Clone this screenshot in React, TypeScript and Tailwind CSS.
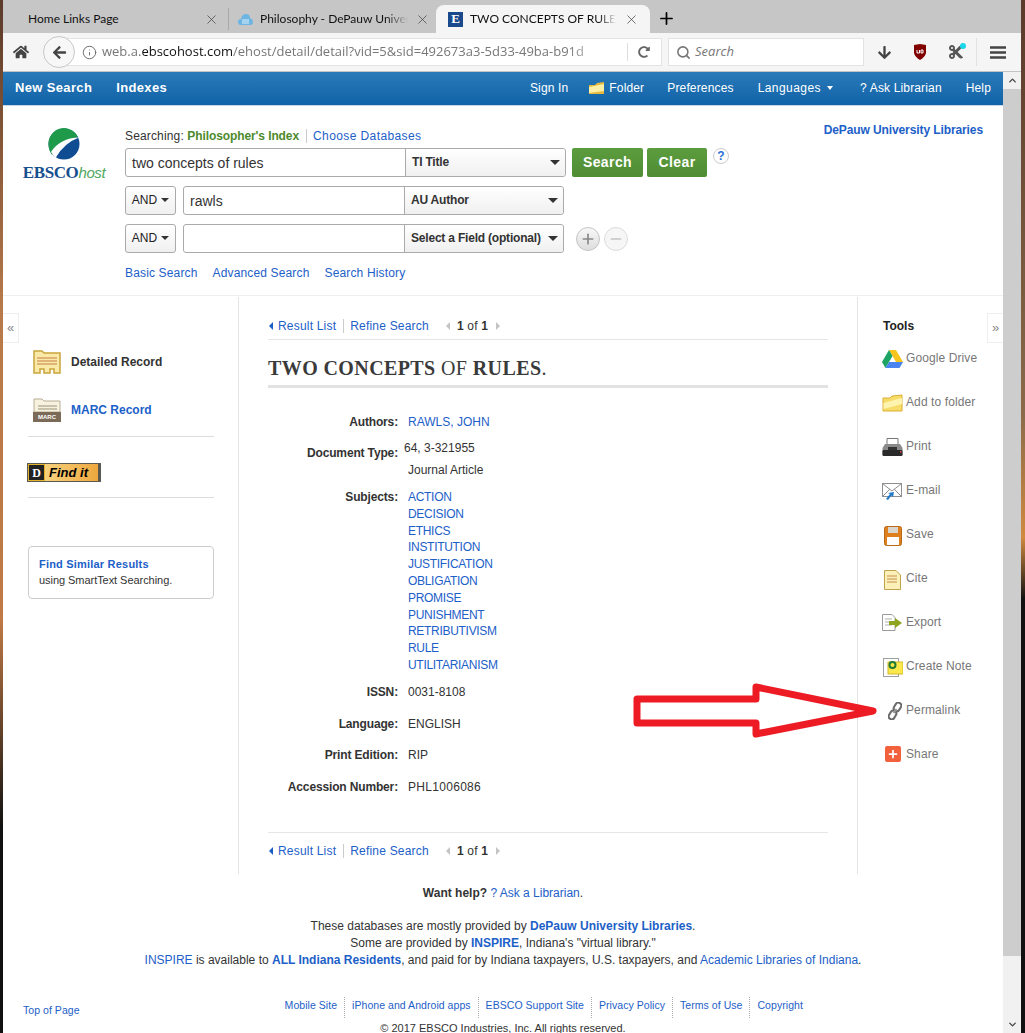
import { ReactNode } from "react";
import { FaArrowDown, FaArrowLeft, FaCut, FaHome, FaRedoAlt } from "react-icons/fa";
import { ChevronDown, ChevronUp, Info, Search, X, Plus, Minus } from "lucide-react";

const subjects = ["ACTION", "DECISION", "ETHICS", "INSTITUTION", "JUSTIFICATION", "OBLIGATION", "PROMISE", "PUNISHMENT", "RETRIBUTIVISM", "RULE", "UTILITARIANISM"];
const footerLinks = ["Mobile Site", "iPhone and Android apps", "EBSCO Support Site", "Privacy Policy", "Terms of Use", "Copyright"];

const Caret = ({ className = "" }: { className?: string }) => (
  <span className={`inline-block w-0 h-0 border-x-[4px] border-x-transparent border-t-[4px] border-t-[#333] ${className}`} />
);

const FolderIcon = () => (
  <svg width="21" height="18" viewBox="0 0 21 18">
    <path d="M1 4 L8 4 L10 2 L20 1 L20 17 L1 17 Z" fill="#f8dc6a" stroke="#dcae33" />
    <path d="M1.5 9 L20 4 L20 10 L1.5 15 Z" fill="#fff3b0" />
  </svg>
);

const DriveIcon = () => (
  <svg width="21" height="18" viewBox="0 0 21 18">
    <path d="M7 0 L14 0 L21 12 L14 12 Z" fill="#f8c51c" />
    <path d="M7 0 L10.5 6 L3.5 18 L0 12 Z" fill="#1da462" />
    <path d="M7 12 L21 12 L17.500 18 L3.500 18 Z" fill="#4a84f0" />
  </svg>
);

const PrintIcon = () => (
  <svg width="21" height="20" viewBox="0 0 21 20">
    <path d="M5 0.500 H16 V8 H5 Z" fill="#fff" stroke="#777" />
    <path d="M3 6 H18 L20.500 10 V17 H0.500 V10 Z" fill="#8a8a8a" />
    <rect x="0.500" y="12" width="20" height="6" rx="1" fill="#2a2a2a" />
    <rect x="6" y="9" width="9" height="3" fill="#333" />
    <rect x="18" y="13" width="1.500" height="1.500" fill="#d44" />
  </svg>
);

const MailIcon = () => (
  <svg width="21" height="18" viewBox="0 0 21 18">
    <rect x="0.500" y="1.500" width="19" height="13" fill="#fff" stroke="#8f8f8f" />
    <path d="M1 2 L10 9 L19 2 M1 14 L8 7 M19 14 L12 7" fill="none" stroke="#8f8f8f" />
    <path d="M4 17 L8 12 L6 11 L12 10 L11 15 L9.500 13.500 L6 18 Z" fill="#1f78c8" />
  </svg>
);

const SaveIcon = () => (
  <svg width="18" height="20" viewBox="0 0 18 20">
    <rect x="0.500" y="0.500" width="17" height="19" rx="2" fill="#dd7f1d" stroke="#b96a18" />
    <rect x="4" y="1" width="10" height="6" fill="#d9d4cc" />
    <rect x="3" y="11" width="12" height="8" fill="#fff" />
  </svg>
);

const CiteIcon = () => (
  <svg width="17" height="20" viewBox="0 0 17 20">
    <path d="M0.500 0.500 H12 L16.500 5 V19.500 H0.500 Z" fill="#fbf0b8" stroke="#bda34a" />
    <path d="M3 6 H13 M3 9 H13 M3 12 H13" stroke="#d9ae72" strokeWidth="1.500" />
  </svg>
);

const ExportIcon = () => (
  <svg width="21" height="17" viewBox="0 0 21 17">
    <path d="M0.500 0.500 H10 L13 3.500 V16.500 H0.500 Z" fill="#fff" stroke="#9a9a9a" />
    <path d="M3 5 H10 M3 8 H8 M3 11 H10" stroke="#b0b0b0" />
    <path d="M7 7 H13 V4 L20 9 L13 14 V11 H7 Z" fill="#8da51f" />
  </svg>
);

const NoteIcon = () => (
  <svg width="20" height="19" viewBox="0 0 20 19">
    <rect x="0.500" y="0.500" width="15" height="18" fill="#fff" stroke="#a0a0a0" />
    <rect x="5" y="4" width="15" height="12" fill="#fbe84b" stroke="#d4b82c" />
    <circle cx="9.500" cy="7" r="3" fill="none" stroke="#1f7a35" strokeWidth="2" />
  </svg>
);

const ChainIcon = () => (
  <svg width="14" height="18" viewBox="0 0 14 18" className="ml-[5px]">
    <g fill="none" stroke="#6a6a6a" strokeWidth="2">
      <rect x="6.500" y="0.500" width="6" height="9" rx="3" transform="rotate(32 9.500 5)" />
      <rect x="1.500" y="8.500" width="6" height="9" rx="3" transform="rotate(32 4.500 13)" />
      <path d="M5.500 11 L8.500 7" stroke="#999" />
    </g>
  </svg>
);

const ShareIcon = () => (
  <div className="w-4 h-4 rounded-[2px] bg-[#f2603c] flex items-center justify-center">
    <Plus size={12} color="#fff" strokeWidth={3.500} />
  </div>
);

const tools: { label: string; icon: ReactNode }[] = [
  { label: "Google Drive", icon: <DriveIcon /> },
  { label: "Add to folder", icon: <FolderIcon /> },
  { label: "Print", icon: <PrintIcon /> },
  { label: "E-mail", icon: <MailIcon /> },
  { label: "Save", icon: <SaveIcon /> },
  { label: "Cite", icon: <CiteIcon /> },
  { label: "Export", icon: <ExportIcon /> },
  { label: "Create Note", icon: <NoteIcon /> },
  { label: "Permalink", icon: <ChainIcon /> },
  { label: "Share", icon: <ShareIcon /> },
];

const RecordNav = () => (
  <div className="flex items-center h-[17px] text-[12px] tracking-[0.2px]">
    <span className="w-0 h-0 border-y-[4px] border-y-transparent border-r-[4px] border-r-[#1a5fc4] mr-[5px] ml-[1px]" />
    <a className="text-[#1c60c8]">Result List</a>
    <span className="w-px h-[14px] bg-[#ccc] ml-[7px] mr-[6px]" />
    <a className="text-[#1c60c8]">Refine Search</a>
    <span className="w-0 h-0 border-y-[4px] border-y-transparent border-r-[4px] border-r-[#c4c4c4] ml-[17px] mr-[7px]" />
    <span className="text-[#333]"><b>1</b> of <b>1</b></span>
    <span className="w-0 h-0 border-y-[4px] border-y-transparent border-l-[4px] border-l-[#c4c4c4] ml-[8px]" />
  </div>
);

const FieldRow = ({ label, children, className = "" }: { label: string; children: ReactNode; className?: string }) => (
  <div className={`flex leading-[17px] ${className}`}>
    <div className="w-[130px] text-right font-bold text-[#333] shrink-0 tracking-[-0.15px]">{label}:</div>
    <div className="ml-[10px]">{children}</div>
  </div>
);

const SelectBox = ({ label, className = "" }: { label: string; className?: string }) => (
  <div className={`h-full flex items-center justify-between pl-[6px] pr-[5px] border-l border-[#aaa] bg-gradient-to-b from-white to-[#f0f0f0] text-[12px] font-bold text-[#333] tracking-[-0.2px] ${className}`}>
    <span className="pb-[2px]">{label}</span>
    <Caret className="border-x-[5px]! border-t-[5px]!" />
  </div>
);

const AndBox = () => (
  <div className="w-[51px] h-full flex items-center justify-center gap-[4px] pb-[1px] border border-[#aaa] rounded-[3px] bg-gradient-to-b from-white to-[#f0f0f0] text-[12px] text-[#222]">
    AND <Caret />
  </div>
);

const Tab = ({ children, close, className = "" }: { children: ReactNode; close: string; className?: string }) => (
  <div className={`flex items-center relative ${className}`}>
    {children}
    <X size={15} strokeWidth={1.200} color="#444" className={close} />
  </div>
);

export default function App() {
  return (
    <div className="w-[1025px] h-[1033px] overflow-hidden relative flex font-['Liberation_Sans',Arial,sans-serif] bg-white text-[12px] text-[#333]">
      <div className="w-[3px] shrink-0 bg-[linear-gradient(#5a3a2a,#b87a4a_30%,#c07a45_60%,#111_80%,#111)]" />
      <div className="w-[1018px] shrink-0 flex flex-col">
        {/* browser tabs */}
        <div className="h-[33px] shrink-0 bg-[#c6c6c6] flex text-[12px] text-[#111] font-['Lato',sans-serif]">
          <Tab close="ml-auto mr-[9px]" className="w-[226px] pl-[25px] border-r border-[#a9a9a9] mt-[8px] mb-[3px]">Home Links Page</Tab>
          <Tab close="ml-auto mr-[6px]" className="w-[207px] pl-[9px] pt-[5px]">
            <svg width="15" height="13" viewBox="0 0 15 13" className="mr-[7px]">
              <path d="M3 12 Q0 12 0 9 Q0 6 3 6 Q4 1 8 1 Q12 1 12 5 Q15 6 15 9 Q15 12 12 12 Z" fill="#6db5e3" />
              <rect x="4" y="6" width="7" height="5" fill="#a5d2ee" />
            </svg>
            <span className="w-[148px] overflow-hidden whitespace-nowrap [mask-image:linear-gradient(90deg,#000_85%,transparent)]">Philosophy - DePauw Univer</span>
          </Tab>
          <Tab close="ml-auto mr-[11px]" className="w-[214px] mt-[5px] bg-[#f5f5f5] rounded-t-[8px] pl-[12px]">
            <span className="w-[15px] h-[15px] bg-[#1b4a8c] text-white text-[13px] font-bold font-['Liberation_Serif',serif] flex items-center justify-center mr-[7px]">E</span>
            <span className="w-[146px] overflow-hidden whitespace-nowrap [mask-image:linear-gradient(90deg,#000_88%,transparent)]">TWO CONCEPTS OF RULES:</span>
          </Tab>
          <Plus size={19} color="#000" strokeWidth={2.200} className="ml-[7px] mt-[9px]" />
        </div>

        {/* browser toolbar */}
        <div className="h-[39px] shrink-0 bg-[#f5f5f5] border-b border-[#c4c4c4] flex items-center relative">
          <FaHome size={16} color="#444" className="ml-[10px]" />
          <div className="ml-[29px] h-[28px] w-[604px] bg-white border border-[#e3e3e3] flex items-center pl-[23px] text-[13px] text-[#777] font-['Open_Sans',sans-serif]">
            <Info size={15} color="#666" strokeWidth={1.500} className="mr-[5px] shrink-0" />
            <span className="w-[520px] overflow-hidden whitespace-nowrap [mask-image:linear-gradient(90deg,#000_90%,transparent_97%)]">web.a.<span className="text-[#111]">ebscohost.com</span>/ehost/detail/detail?vid=5&amp;sid=492673a3-5d33-49ba-b91d</span>
            <span className="w-px h-[18px] bg-[#ddd] ml-[5px]" />
            <FaRedoAlt size={12} color="#666" className="ml-[10px]" />
          </div>
          <div className="absolute left-[40px] top-[3px] w-[32px] h-[32px] rounded-full border border-[#c8c8c8] bg-[#f7f7f7] flex items-center justify-center">
            <FaArrowLeft size={15} color="#444" />
          </div>
          <div className="ml-[6px] w-[196px] h-[28px] bg-white border border-[#e3e3e3] flex items-center pl-[7px] text-[13px] italic text-[#777] font-['Open_Sans',sans-serif]">
            <Search size={15} color="#777" strokeWidth={2.500} className="mr-[4px]" />
            Search
          </div>
          <FaArrowDown size={15} color="#444" className="ml-[13px]" />
          <svg width="14" height="16" viewBox="0 0 14 16" className="ml-[21px]">
            <path d="M1 1 L7 0 L13 1 L13 9 Q12 13 7 16 Q2 13 1 9 Z" fill="#800000" />
            <path d="M4 6 V9 H6.500 V6 M8 6 H10 V9 H8 Z" fill="none" stroke="#fff" strokeWidth="1" />
          </svg>
          <div className="relative ml-[21px]">
            <FaCut size={16} color="#555" />
            <span className="absolute -top-[1px] -right-[2px] w-[6px] h-[6px] rounded-full bg-[#19d7e8]" />
          </div>
          <span className="w-px h-[28px] bg-[#e2e2e2] ml-[12px]" />
          <svg width="16" height="13" viewBox="0 0 16 13" className="ml-[13px]">
            <path d="M0 1.500 H16 M0 6.500 H16 M0 11.500 H16" stroke="#444" strokeWidth="2.500" />
          </svg>
        </div>

        <div className="flex flex-1 min-h-0">
          <div className="w-[1000px] shrink-0 flex flex-col">
            {/* ebsco nav */}
            <div className="h-[34px] shrink-0 bg-gradient-to-b from-[#2a7ab9] to-[#0f63a8] border-b border-[#c9d6e2] flex items-center pl-[12px] pr-[12px] pb-[2px] text-white tracking-[0.15px]">
              <span className="font-bold text-[13px] tracking-[0.35px]">New Search</span>
              <span className="font-bold text-[13px] tracking-[0.35px] ml-[24px]">Indexes</span>
              <span className="ml-auto">Sign In</span>
              <svg width="15" height="12" viewBox="0 0 15 12" className="ml-[21px] mr-[5px]">
                <path d="M0 3 L6 3 L8 1 L15 0 V12 H0 Z" fill="#e3b93e" />
                <path d="M0 5 L15 2 V9 L0 11 Z" fill="#fff0a5" />
              </svg>
              <span>Folder</span>
              <span className="ml-[23px]">Preferences</span>
              <span className="ml-[24px] tracking-[0.45px]">Languages</span>
              <span className="ml-[6px] w-0 h-0 border-x-[3px] border-x-transparent border-t-[4px] border-t-white" />
              <span className="ml-[27px]">? Ask Librarian</span>
              <span className="ml-[24px]">Help</span>
            </div>

            {/* search header */}
            <div className="h-[190px] shrink-0 flex border-b border-[#eeeeee]">
              <div className="w-[122px] shrink-0 pt-[22px] flex flex-col items-center">
                <svg width="32" height="32" viewBox="0 0 32 32">
                  <circle cx="16" cy="16" r="15.500" fill="#0f4c92" />
                  <path d="M0.500 16 A15.500 15.500 0 0 1 30 9 Q12 12 4 27 Q0.500 22 0.500 16 Z" fill="#1f9a4a" />
                  <path d="M3 24 Q12 10 31 9.500 Q16 15 7.500 30 Z" fill="#fff" />
                </svg>
                <div className="mt-[3px] leading-[20px] text-[17px] font-bold tracking-[-0.4px] text-[#17508f] font-['Liberation_Serif',serif]">
                  EBSCO<span className="font-['Liberation_Sans',sans-serif] italic font-normal text-[#4fa860] text-[15px]">host</span>
                </div>
              </div>
              <div className="flex-1 pt-[21px]">
                <div className="h-[18px] flex items-center tracking-[0.15px]">
                  Searching:&nbsp;<b className="text-[#4e8a2d] tracking-[-0.1px]">Philosopher's Index</b>
                  <span className="w-px h-[14px] bg-[#ccc] ml-[7px] mr-[6px]" />
                  <a className="text-[#1c60c8] tracking-[0.4px]">Choose Databases</a>
                  <a className="ml-auto mr-[20px] -mt-[12px] font-bold text-[#1c60c8] tracking-[-0.1px]">DePauw University Libraries</a>
                </div>
                <div className="flex items-start h-[29px] mt-[3px]">
                  <div className="flex w-[441px] h-[29px] border border-[#aaa] rounded-[3px] bg-white">
                    <div className="w-[279px] pl-[6px] pt-[2px] flex items-center text-[14px] text-[#333]">two concepts of rules</div>
                    <SelectBox label="TI Title" className="flex-1 rounded-r-[3px]" />
                  </div>
                  <button className="ml-[6px] w-[71px] h-[29px] rounded-[2px] bg-gradient-to-b from-[#5c9c3e] to-[#4f8c33] text-white font-bold text-[14px] tracking-[0.4px]">Search</button>
                  <button className="ml-[4px] w-[60px] h-[29px] rounded-[2px] bg-gradient-to-b from-[#5c9c3e] to-[#4f8c33] text-white font-bold text-[14px] tracking-[0.4px]">Clear</button>
                  <span className="ml-[6px] w-[16px] h-[16px] rounded-full border border-[#ccc] flex items-center justify-center text-[#2a6fd6] font-bold">?</span>
                </div>
                <div className="flex h-[29px] mt-[9px]">
                  <AndBox />
                  <div className="ml-[7px] flex w-[381px] h-full border border-[#aaa] rounded-[3px] bg-white">
                    <div className="w-[220px] pl-[6px] pt-[1px] flex items-center text-[14px]">rawls</div>
                    <SelectBox label="AU Author" className="flex-1 rounded-r-[3px]" />
                  </div>
                </div>
                <div className="flex items-center h-[29px] mt-[9px]">
                  <AndBox />
                  <div className="ml-[7px] flex w-[381px] h-full border border-[#aaa] rounded-[3px] bg-white">
                    <div className="w-[220px]" />
                    <SelectBox label="Select a Field (optional)" className="flex-1 rounded-r-[3px]" />
                  </div>
                  <span className="ml-[12px] w-[24px] h-[24px] rounded-full border border-[#c4c4c4] bg-gradient-to-b from-[#f8f8f8] to-[#dddddd] flex items-center justify-center">
                    <Plus size={16} color="#888" strokeWidth={2.500} />
                  </span>
                  <span className="ml-[4px] w-[24px] h-[24px] rounded-full border border-[#ddd] bg-[#f6f6f6] flex items-center justify-center">
                    <Minus size={16} color="#c4c4c4" strokeWidth={2.500} />
                  </span>
                </div>
                <div className="flex gap-[15px] mt-[11px] text-[#1c60c8] tracking-[0.15px]">
                  <a>Basic Search</a>
                  <a>Advanced Search</a>
                  <a>Search History</a>
                </div>
              </div>
            </div>

            {/* three columns */}
            <div className="h-[577px] shrink-0 flex mt-[1px]">
              <aside className="w-[236px] shrink-0 border-r border-[#e4e4e4] pl-[25px] pr-[24px] relative">
                <div className="absolute left-0 top-[16px] w-[16px] h-[30px] border border-l-0 border-[#eee] flex items-center justify-center text-[#888] text-[13px]">«</div>
                <div className="flex items-center h-[24px] mt-[53px] ml-[5px]">
                  <svg width="28" height="24" viewBox="0 0 28 24">
                    <path d="M1 1 H9 L11 3 H27 V23 H21 V19 H17 V23 H11 V19 H7 V23 H1 Z" fill="#fbe9a8" stroke="#c9a53d" strokeWidth="1.500" />
                    <path d="M4 8 H24 M4 11 H24 M4 14 H24" stroke="#d6a065" strokeWidth="1.300" />
                  </svg>
                  <b className="ml-[10px] text-[#333]">Detailed Record</b>
                </div>
                <div className="flex items-center h-[24px] mt-[24px] ml-[5px]">
                  <div className="w-[28px] h-[24px] flex flex-col">
                    <svg width="28" height="14" viewBox="0 0 28 14" className="shrink-0">
                      <path d="M1 1 H9 L11 3 H27 V14 H1 Z" fill="#f7f1df" stroke="#b7ad95" />
                      <path d="M5 8 H24 M5 11 H24" stroke="#b9b19c" strokeWidth="1.300" />
                    </svg>
                    <span className="h-[10px] bg-[#7b6a58] text-white text-[6px] font-bold leading-[10px] text-center">MARC</span>
                  </div>
                  <b className="ml-[10px] text-[#1c60c8]">MARC Record</b>
                </div>
                <div className="h-px bg-[#ddd] mt-[14px]" />
                <div className="w-[74px] h-[19px] mt-[26px] -ml-px bg-[#5a5a52] p-[1px] flex">
                  <span className="w-[17px] h-[17px] bg-[#222] border border-[#e3b32e] text-white text-[12px] font-bold font-['Liberation_Serif',serif] flex items-center justify-center">D</span>
                  <span className="w-[53px] bg-gradient-to-r from-[#f6d27c] to-[#eea83c] text-black italic font-bold text-[13px] leading-[17px] pl-[4px]">Find it</span>
                </div>
                <div className="h-px bg-[#ddd] mt-[15px]" />
                <div className="h-[53px] mt-[48px] border border-[#ccc] rounded-[4px] pl-[10px] pt-[9px] text-[11px] leading-[16px]">
                  <b className="text-[#1c60c8] block tracking-[0.2px]">Find Similar Results</b>
                  <span className="text-[#333] tracking-[-0.05px]">using SmartText Searching.</span>
                </div>
              </aside>

              <main className="w-[619px] shrink-0 pl-[29px] pr-[29px] pt-[20px] border-r border-[#e4e4e4]">
                <RecordNav />
                <div className="h-px bg-[#e6e6e6] mt-[5px]" />
                <h1 className="mt-[16px] h-[24px] leading-[24px] font-['Liberation_Serif',serif] text-[20px] text-[#3a3a3a] tracking-[0.4px]">
                  <b>TWO CONCEPTS</b> OF <b>RULES</b>.
                </h1>
                <div className="h-[3px] bg-[#e2e2e2] mt-[5px]" />
                <div className="mt-[26px]">
                  <FieldRow label="Authors"><a className="text-[#1c60c8]">RAWLS, JOHN</a></FieldRow>
                  <div className="flex leading-[17px] mt-[9px]">
                    <div className="w-[130px] text-right font-bold text-[#333] shrink-0 mt-[5px] tracking-[-0.15px]">Document Type:</div>
                    <div className="ml-[6px]">
                      <div>64, 3-321955</div>
                      <div className="mt-[5px] ml-[4px]">Journal Article</div>
                    </div>
                  </div>
                  <FieldRow label="Subjects" className="mt-[10px]">
                    {subjects.map((s) => (
                      <a key={s} className="block text-[#1c60c8] leading-[16.8px] tracking-[-0.3px]">{s}</a>
                    ))}
                  </FieldRow>
                  <FieldRow label="ISSN" className="mt-[10px]">0031-8108</FieldRow>
                  <FieldRow label="Language" className="mt-[15px]">ENGLISH</FieldRow>
                  <FieldRow label="Print Edition" className="mt-[14px]">RIP</FieldRow>
                  <FieldRow label="Accession Number" className="mt-[15px]"><span className="tracking-[0.3px]">PHL1006086</span></FieldRow>
                </div>
                <div className="h-px bg-[#e6e6e6] mt-[36px]" />
                <div className="mt-[10px]"><RecordNav /></div>
              </main>

              <aside className="flex-1 pl-[25px] relative">
                <div className="absolute right-0 top-[16px] w-[16px] h-[30px] border border-r-0 border-[#eee] flex items-center justify-center text-[#888] text-[13px]">»</div>
                <div className="font-bold text-[#222] mt-[22px] leading-[15px]">Tools</div>
                <div className="mt-[16px]">
                  {tools.map((t) => (
                    <div key={t.label} className="h-[44px] flex text-[#777] tracking-[0.1px]">
                      <div className="w-[23px] -ml-[2px] shrink-0 flex justify-center items-start">{t.icon}</div>
                      <span className="ml-[2px] leading-[17px]">{t.label}</span>
                    </div>
                  ))}
                </div>
              </aside>
            </div>

            {/* footer */}
            <footer className="flex-1 relative text-center">
              <p className="mt-[11px] leading-[17px]"><b>Want help?</b> <a className="text-[#1c60c8]">? Ask a Librarian</a>.</p>
              <p className="mt-[16px] leading-[17px]">These databases are mostly provided by <b className="text-[#1c60c8]">DePauw University Libraries</b>.</p>
              <p className="leading-[17px]">Some are provided by <b className="text-[#1c60c8]">INSPIRE</b>, Indiana's "virtual library."</p>
              <p className="leading-[17px]"><a className="text-[#1c60c8]">INSPIRE</a> is available to <b className="text-[#1c60c8]">ALL Indiana Residents</b>, and paid for by Indiana taxpayers, U.S. taxpayers, and <a className="text-[#1c60c8]">Academic Libraries of Indiana</a>.</p>
              <div className="flex mt-[28px] text-[10.5px] leading-[16px] text-[#1c60c8] tracking-[0.05px]">
                <a className="ml-[20px] mt-[5px]">Top of Page</a>
                <div className="flex ml-[205px]">
                  {footerLinks.map((l, i) => (
                    <a key={l} className={i === 0 ? "pr-[7px]" : "px-[7px] border-l border-dotted border-[#aaa]"}>{l}</a>
                  ))}
                </div>
              </div>
              <p className="mt-[2px] text-[11px] leading-[16px]">© 2017 EBSCO Industries, Inc. All rights reserved.</p>
            </footer>
          </div>

          {/* scrollbar */}
          <div className="w-[18px] shrink-0 bg-[#f1f1f1] flex flex-col">
            <div className="h-[17px] flex items-center justify-center"><ChevronUp size={11} color="#444" strokeWidth={3} /></div>
            <div className="h-[867px] bg-[#cdcdcd]" />
            <div className="mt-auto h-[17px] flex items-center justify-center"><ChevronDown size={11} color="#444" strokeWidth={3} /></div>
          </div>
        </div>
      </div>
      <div className="flex-1 bg-[linear-gradient(#5a3a2a,#8a6a4a_40%,#d08a40_52%,#111_58%,#111)]" />

      {/* hand drawn annotation arrow */}
      <svg width="255" height="65" viewBox="0 0 255 65" className="absolute left-[630px] top-[680px]">
        <path d="M7 19 H126 V7 L243 31 L126 54 V43 H7 Z" fill="#fff" stroke="#ed1c24" strokeWidth="7" strokeLinejoin="round" />
      </svg>
    </div>
  );
}
